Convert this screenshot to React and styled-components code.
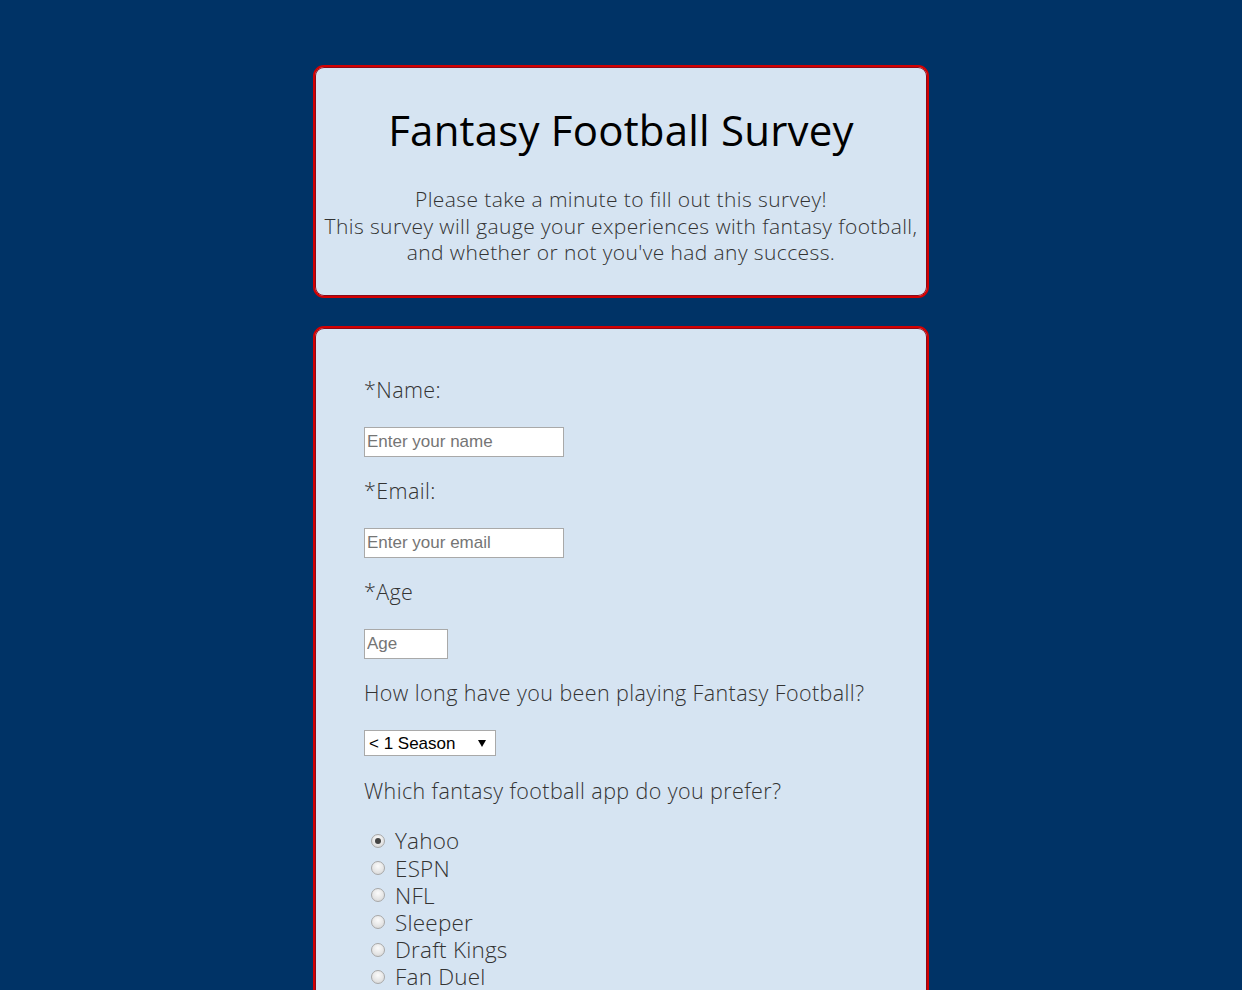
import React from "react";
import styled, { createGlobalStyle } from "styled-components";

const Global = createGlobalStyle`
  html, body { margin: 0; padding: 0; }
  body {
    background: #003366;
    font-family: "Open Sans", "Lato", sans-serif;
    font-weight: 300;
  }
`;

const Page = styled.div`
  display: flex;
  flex-direction: column;
  align-items: center;
  gap: 28px;
  padding-top: 65px;
`;

const Card = styled.section`
  box-sizing: border-box;
  width: 616px;
  background: #d6e4f2;
  border: 2px solid #d40000;
  box-shadow: inset 0 0 0 1px #8a0a1a;
  border-radius: 11px;
  padding: ${(p) => p.$pad};
`;

const Title = styled.h1`
  margin: 0;
  text-align: center;
  font-size: 42px;
  font-weight: 400;
  color: #000;
  line-height: 1.2;
  letter-spacing: 0.2px;
`;

const Intro = styled.p`
  margin: 31px 0 0;
  text-align: center;
  font-size: 21px;
  letter-spacing: 0.4px;
  line-height: 26.3px;
  color: #333;
`;

const Form = styled.form`
  display: flex;
  flex-direction: column;
  align-items: flex-start;
`;

const Label = styled.label`
  font-size: 21.5px;
  letter-spacing: 0.4px;
  color: #333;
  line-height: 28px;
  margin-bottom: ${(p) => p.$mb || "23px"};
`;

const TextInput = styled.input`
  box-sizing: border-box;
  width: ${(p) => p.$w};
  height: 30px;
  border: 1px solid #a9a9a9;
  background: #fff;
  font-family: "Liberation Sans", Arial, sans-serif;
  font-size: 17px;
  padding: 0 2px;
  margin-bottom: 20px;
  &::placeholder { color: #757575; }
`;

const Select = styled.select`
  box-sizing: border-box;
  width: 132px;
  height: 26px;
  border: 1px solid #a9a9a9;
  background: #fff;
  font-family: "Liberation Sans", Arial, sans-serif;
  font-size: 17px;
  color: #000;
  padding: 0 4px;
  margin-bottom: 21px;
  appearance: none;
  border-radius: 0;
  background-image: url("data:image/svg+xml;utf8,<svg xmlns='http://www.w3.org/2000/svg' width='8' height='8'><path d='M0 1h8L4 8z' fill='black'/></svg>");
  background-repeat: no-repeat;
  background-position: right 9px center;
`;

const RadioList = styled.div`
  display: flex;
  flex-direction: column;
  margin-top: 22px;
`;

const RadioRow = styled.label`
  display: flex;
  align-items: center;
  height: 27.2px;
  line-height: 27px;
  font-size: 22.5px;
  letter-spacing: 0.2px;
  color: #333;
`;

const Radio = styled.input`
  appearance: none;
  box-sizing: border-box;
  margin: 0 10px 0 7px;
  width: 14px;
  height: 14px;
  border-radius: 50%;
  border: 1px solid #a8a8a8;
  background: radial-gradient(circle at 50% 35%, #fbfbfb 0%, #e4e4e4 60%, #cfcfcf 100%);
  position: relative;
  flex: none;
  &:checked::after {
    content: "";
    position: absolute;
    left: 3px;
    top: 3px;
    width: 6px;
    height: 6px;
    border-radius: 50%;
    background: #444;
  }
`;

const Spacer = styled.div`
  height: 200px;
`;

const apps = ["Yahoo", "ESPN", "NFL", "Sleeper", "Draft Kings", "Fan Duel"];

export default function App() {
  return (
    <>
      <Global />
      <Page>
        <Card $pad="38px 8px 31px">
          <Title>Fantasy Football Survey</Title>
          <Intro>
            Please take a minute to fill out this survey!
            <br />
            This survey will gauge your experiences with fantasy football,
            <br />
            and whether or not you've had any success.
          </Intro>
        </Card>
        <Card $pad="48px 49px 40px">
          <Form onSubmit={(e) => e.preventDefault()}>
            <Label htmlFor="name">*Name:</Label>
            <TextInput id="name" $w="200px" placeholder="Enter your name" />
            <Label htmlFor="email">*Email:</Label>
            <TextInput id="email" $w="200px" placeholder="Enter your email" />
            <Label htmlFor="age">*Age</Label>
            <TextInput id="age" $w="84px" placeholder="Age" />
            <Label htmlFor="len">How long have you been playing Fantasy Football?</Label>
            <Select id="len" defaultValue="1">
              <option value="1">&lt; 1 Season</option>
              <option value="2">1-3 Seasons</option>
              <option value="3">4+ Seasons</option>
            </Select>
            <Label as="div" $mb="0">Which fantasy football app do you prefer?</Label>
            <RadioList>
              {apps.map((a, i) => (
                <RadioRow key={a}>
                  <Radio type="radio" name="app" defaultChecked={i === 0} />
                  {a}
                </RadioRow>
              ))}
            </RadioList>
            <Spacer />
          </Form>
        </Card>
      </Page>
    </>
  );
}
